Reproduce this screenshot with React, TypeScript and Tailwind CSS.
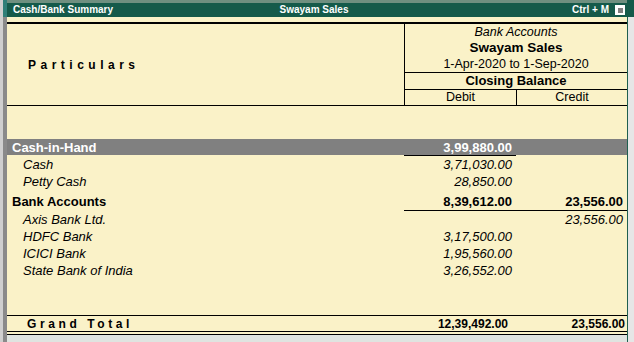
import React from "react";

const F = { fontFamily: '"Liberation Sans", Arial, sans-serif' };

function Row({
  name,
  debit,
  credit,
  kind,
}: {
  name: string;
  debit?: string;
  credit?: string;
  kind: "group" | "item";
}) {
  const cls =
    kind === "group"
      ? "font-bold not-italic"
      : "italic";
  return (
    <div className={`grid grid-cols-[397px_113px_110px] h-[17px] items-center text-[13px] leading-none text-black ${cls}`}>
      <div className={kind === "group" ? "pl-[5px]" : "pl-[16px]"}>{name}</div>
      <div className="text-right pr-[5px]">{debit}</div>
      <div className="text-right pr-[4px]">{credit}</div>
    </div>
  );
}

export default function App() {
  return (
    <div className="w-[634px] h-[342px] flex bg-[#d6d6d6] overflow-hidden" style={F}>
      {/* left edge */}
      <div className="w-[7px] flex flex-col">
        <div className="h-[17px] flex">
          <div className="w-[3px] bg-[#cfcfcf]" />
          <div className="w-[4px] bg-[#2f7f78]" />
        </div>
        <div className="flex-1 flex">
          <div className="w-[3px] bg-[#cfcfcf]" />
          <div className="w-[4px] bg-[#8a8a8a]" />
        </div>
      </div>

      {/* main */}
      <div className="w-[620px] flex flex-col">
        <div className="h-[3px] bg-[#6f8f80]" />
        <div className="h-[14px] bg-[#155a4a] flex items-center text-white text-[10px] font-bold leading-none pl-[6px] pr-[2px]">
          <div className="w-[120px]">Cash/Bank Summary</div>
          <div className="flex-1 text-center pr-[10px]">Swayam Sales</div>
          <div className="w-[120px] flex items-center justify-end gap-[6px]">
            <span>Ctrl + M</span>
            <span className="w-[10px] h-[10px] bg-white flex items-center justify-center">
              <span className="w-[5px] h-[5px] bg-[#808080]" />
            </span>
          </div>
        </div>

        <div className="flex-1 bg-[#faf2c8] flex flex-col">
          <div className="h-[5px]" />
          {/* header */}
          <div className="h-[84px] border-t-2 border-b border-black flex">
            <div className="w-[397px] flex items-center pl-[21px] text-[12px] font-bold tracking-[4.5px]">
              Particulars
            </div>
            <div className="flex-1 border-l border-black flex flex-col">
              <div className="h-[48px] flex flex-col items-center text-black">
                <div className="h-[16px] flex items-center text-[12.5px] italic">Bank Accounts</div>
                <div className="h-[16px] flex items-center text-[13.5px] font-bold">Swayam Sales</div>
                <div className="h-[16px] flex items-center text-[12.5px]">1-Apr-2020 to 1-Sep-2020</div>
              </div>
              <div className="h-[17px] border-t border-black flex items-center justify-center text-[13px] font-bold">
                Closing Balance
              </div>
              <div className="h-[16px] border-t border-black flex text-[12.5px]">
                <div className="w-[112px] border-r border-black flex items-center justify-center">Debit</div>
                <div className="flex-1 flex items-center justify-center">Credit</div>
              </div>
            </div>
          </div>

          <div className="h-[33px]" />

          {/* Cash-in-Hand highlighted */}
          <div className="grid grid-cols-[397px_113px_110px] h-[16px] items-center bg-[#808080] text-white font-bold text-[13px] leading-none">
            <div className="pl-[5px]">Cash-in-Hand</div>
            <div className="text-right pr-[5px]">3,99,880.00</div>
            <div />
          </div>
          <div className="grid grid-cols-[397px_113px_110px] h-[1px]">
            <div />
            <div className="bg-black mr-[1px]" />
            <div />
          </div>
          <Row name="Cash" debit="3,71,030.00" kind="item" />
          <Row name="Petty Cash" debit="28,850.00" kind="item" />
          <div className="h-[3px]" />
          <Row name="Bank Accounts" debit="8,39,612.00" credit="23,556.00" kind="group" />
          <div className="grid grid-cols-[397px_223px] h-[1px]">
            <div />
            <div className="bg-black" />
          </div>
          <Row name="Axis Bank Ltd." credit="23,556.00" kind="item" />
          <Row name="HDFC Bank" debit="3,17,500.00" kind="item" />
          <Row name="ICICI Bank" debit="1,95,560.00" kind="item" />
          <Row name="State Bank of India" debit="3,26,552.00" kind="item" />

          <div className="flex-1" />

          {/* grand total */}
          <div className="border-t border-black grid grid-cols-[397px_113px_110px] h-[16px] items-center text-[12px] font-bold leading-none">
            <div className="pl-[20px] tracking-[3.6px]">Grand Total</div>
            <div className="text-right pr-[9px]">12,39,492.00</div>
            <div className="text-right pr-[2px]">23,556.00</div>
          </div>
          <div className="h-[1px] bg-black" />
          <div className="h-[2px]" />
          <div className="h-[1px] bg-black" />
          <div className="h-[7px] bg-[#dfe4e0]" />
        </div>
      </div>

      {/* right edge */}
      <div className="w-[7px] flex flex-col">
        <div className="h-[17px] bg-[#155a4a]" />
        <div className="flex-1 flex">
          <div className="w-[1px] bg-[#1f5f4f]" />
          <div className="flex-1 bg-[#e6e6e6]" />
        </div>
      </div>
    </div>
  );
}
